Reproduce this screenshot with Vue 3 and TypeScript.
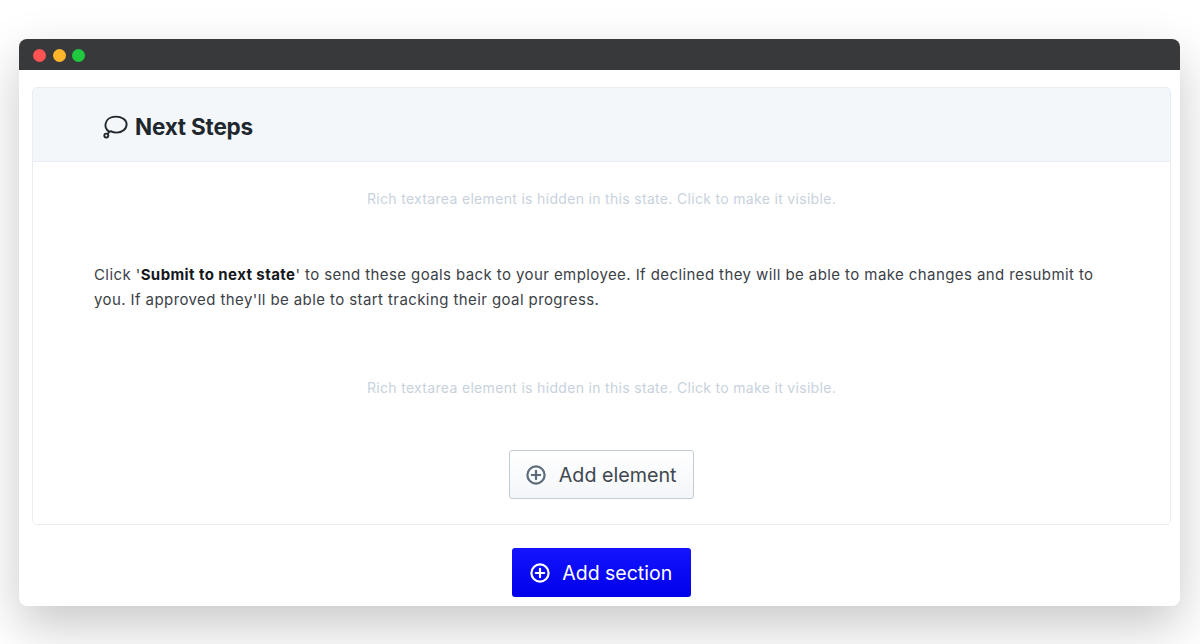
<script setup lang="ts">
const hiddenNote = "Rich textarea element is hidden in this state. Click to make it visible.";
const dots = ["#ff5252", "#ffb62a", "#1fc83f"];
</script>

<template>
  <div class="page">
    <div class="window">
      <div class="titlebar">
        <span v-for="c in dots" :key="c" class="dot" :style="{ background: c }" />
      </div>
      <div class="content">
        <section class="card">
          <header class="card-head">
            <svg class="bubble" width="26" height="24" viewBox="0 0 26 24" fill="none" stroke="#1f272e" stroke-width="1.9" stroke-linejoin="round" stroke-linecap="round">
              <path d="M7 16.6C4.2 14.6 3 11.6 3.6 8.6C4.4 4.4 8.6 1.6 13.8 1.6C19.8 1.6 24.6 4.8 24.6 9.4C24.6 14 20 17.6 14.6 17.6C12.4 17.6 10.6 17.2 9 16.4" />
              <path d="M9 16.4L7 16.6L6.2 18.4" />
              <circle cx="4.3" cy="20.6" r="2" />
            </svg>
            <h2>Next Steps</h2>
          </header>
          <div class="card-body">
            <p class="hidden-note">{{ hiddenNote }}</p>
            <p class="copy">
              Click '<strong>Submit to next state</strong>' to send these goals back to your employee. If declined they will be able to make changes and resubmit to you. If approved they'll be able to start tracking their goal progress.
            </p>
            <p class="hidden-note second">{{ hiddenNote }}</p>
            <button class="btn btn-element">
              <svg width="20" height="20" viewBox="0 0 20 20" fill="none" stroke="#5b6b7b" stroke-width="2.2" stroke-linecap="round">
                <circle cx="10" cy="10" r="8.6" />
                <path d="M10 5.8v8.4M5.8 10h8.4" />
              </svg>
              Add element
            </button>
          </div>
        </section>
        <button class="btn btn-section">
          <svg width="20" height="20" viewBox="0 0 20 20" fill="none" stroke="#fff" stroke-width="2.2" stroke-linecap="round">
            <circle cx="10" cy="10" r="8.6" />
            <path d="M10 5.8v8.4M5.8 10h8.4" />
          </svg>
          Add section
        </button>
      </div>
    </div>
  </div>
</template>

<style>
html,
body {
  margin: 0;
  background: #fff;
}
</style>

<style scoped>
.page {
  box-sizing: border-box;
  width: 1200px;
  height: 644px;
  padding: 39px 20px 0 19px;
  overflow: hidden;
  font-family: Inter, "Liberation Sans", sans-serif;
}

.window {
  height: 567px;
  background: #fff;
  border-radius: 8px;
  box-shadow: 0 20px 50px rgba(0, 0, 0, 0.22);
  overflow: hidden;
  display: flex;
  flex-direction: column;
}

.titlebar {
  height: 31px;
  flex-shrink: 0;
  background: #38393b;
  display: flex;
  align-items: center;
  gap: 6.5px;
  padding: 2px 0 0 14px;
  box-sizing: border-box;
}

.dot {
  width: 13px;
  height: 13px;
  border-radius: 50%;
}

.content {
  flex: 1;
  padding: 17px 9px 0 13px;
  display: flex;
  flex-direction: column;
  align-items: center;
}

.card {
  width: 100%;
  height: 438px;
  box-sizing: border-box;
  border: 1px solid #e9edf1;
  border-radius: 5px;
  overflow: hidden;
}

.card-head {
  height: 74px;
  box-sizing: border-box;
  background: #f3f7fa;
  border-bottom: 1px solid #e9edf1;
  display: flex;
  align-items: center;
  gap: 7px;
  padding: 3px 0 0 69px;
}

.bubble {
  margin-top: 2px;
}

.card-head h2 {
  margin: 0;
  font-size: 22.5px;
  font-weight: 700;
  color: #1f272e;
  letter-spacing: -0.2px;
}

.card-body {
  display: flex;
  flex-direction: column;
  align-items: center;
  padding: 27px 61px 0;
}

.hidden-note {
  margin: 0;
  font-size: 14px;
  letter-spacing: 0.32px;
  line-height: 20px;
  color: #c8d2dd;
  text-align: center;
  white-space: nowrap;
}

.copy {
  margin: 53px 0 0;
  width: 100%;
  font-size: 15px;
  line-height: 25px;
  color: #3b4147;
  letter-spacing: 0.41px;
}

.copy strong {
  color: #14181c;
  font-weight: 700;
  letter-spacing: 0.42px;
}

.second {
  margin-top: 66px;
}

.btn {
  display: inline-flex;
  align-items: center;
  font-family: inherit;
  font-size: 19.7px;
  border-radius: 3px;
  box-sizing: border-box;
}

.btn-element {
  margin-top: 52px;
  width: 185.5px;
  height: 49px;
  gap: 13px;
  padding: 0 0 0 16px;
  background: linear-gradient(#fff, #f3f6f9);
  border: 1px solid #c3ccd4;
  color: #40474e;
}

.btn-section {
  margin-top: 23px;
  width: 178.5px;
  height: 49px;
  gap: 12px;
  padding: 0 0 0 18px;
  font-size: 19.5px;
  background: linear-gradient(#1414ff, #0000ea);
  border: none;
  color: #fff;
}
</style>
